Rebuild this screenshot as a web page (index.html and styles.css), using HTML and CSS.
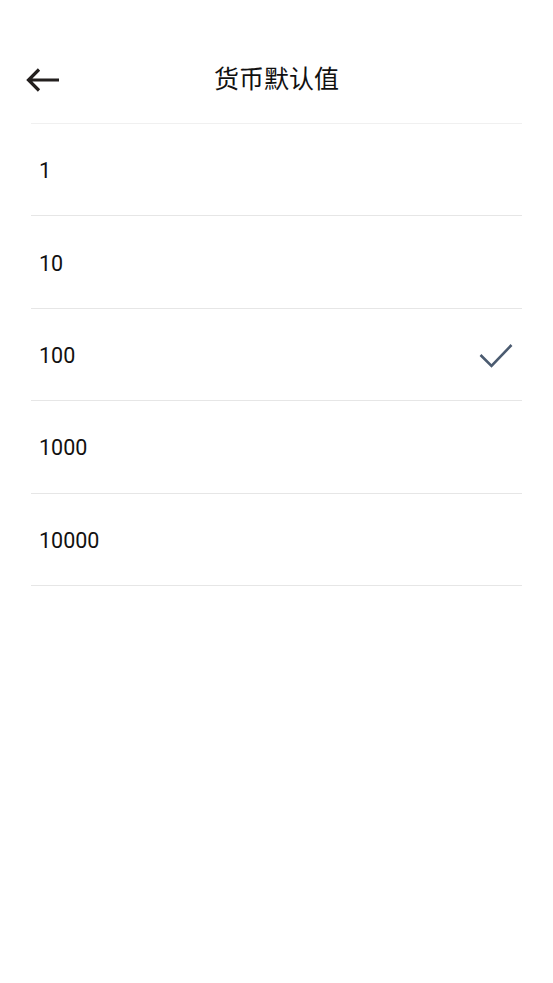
FILE: index.html
```html
<!DOCTYPE html>
<html lang="zh">
<head>
<meta charset="utf-8">
<link rel="stylesheet" href="styles.css">
</head>
<body>
<div class="header">
  <span class="back">
    <svg width="36" height="26" viewBox="0 0 36 26"><path d="M34 13H3.5M14 2.5L3.5 13l10.5 10.5" fill="none" stroke="#231f1e" stroke-width="3.2" stroke-linecap="butt" stroke-linejoin="miter"/></svg>
  </span>
  <div class="title">货币默认值</div>
</div>
<ul class="list">
  <li class="row">1</li>
  <li class="row">10</li>
  <li class="row">100<svg class="check" width="34" height="26" viewBox="0 0 34 26"><path d="M1.5 13l11 11L32.5 3" fill="none" stroke="#4b5b70" stroke-width="2.6"/></svg></li>
  <li class="row">1000</li>
  <li class="row">10000</li>
</ul>
</body>
</html>
```
FILE: styles.css
```css
html, body { margin: 0; padding: 0; background: #fff; }
body { width: 553px; font-family: Roboto, "Noto Sans CJK SC", sans-serif; color: #111; }
.header { position: relative; height: 88px; padding-top: 35px; display: flex; align-items: center; justify-content: center; }
.back { position: absolute; left: 25px; top: 67px; display: block; width: 36px; height: 26px; }
.back svg { display: block; }
.title { font-family: "Noto Sans CJK SC", sans-serif; font-size: 25px; color: #111; margin-top: -4px; }
.list { list-style: none; margin: 0 31px; padding: 0; border-top: 1px solid #f0f0f0; }
.row { box-sizing: border-box; height: 92.4px; border-bottom: 1px solid #e6e6e6; display: flex; align-items: center; justify-content: space-between; padding: 2px 9px 0 8px; font-size: 21.5px; }
.check { display: block; margin-top: -1px; }
```
